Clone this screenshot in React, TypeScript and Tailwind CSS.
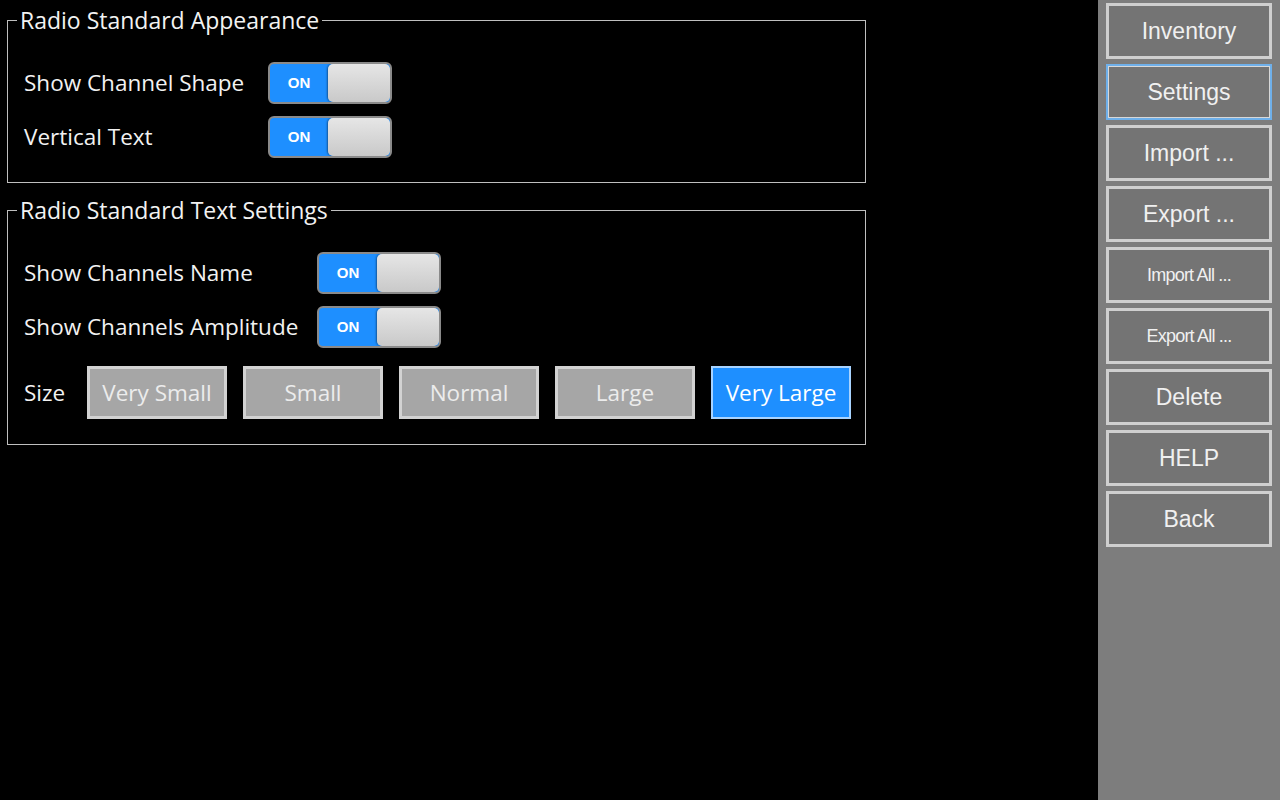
import React from "react";

const mainFont = { fontFamily: '"Open Sans", "Noto Sans", sans-serif' };

function Toggle() {
  return (
    <div className="flex h-[42px] w-[124px] overflow-hidden rounded-[6px] border-2 border-[#8a8a8a] bg-[#1e8fff]">
      <div className="flex w-[58px] items-center justify-center text-[15px] font-bold text-white" style={{ fontFamily: '"Liberation Sans", Arial, sans-serif' }}>
        ON
      </div>
      <div className="flex-1 rounded-[5px] bg-gradient-to-b from-[#e6e6e6] to-[#c9c9c9] shadow-[-1px_0_2px_rgba(0,0,0,0.4)]" />
    </div>
  );
}

function Row({ label, labelW }: { label: string; labelW: string }) {
  return (
    <div className="flex h-[42px] items-center">
      <div className={`${labelW} text-[22.5px] text-[#f2f2f2]`}>{label}</div>
      <Toggle />
    </div>
  );
}

function Group({ title, className, children }: { title: string; className: string; children: React.ReactNode }) {
  return (
    <div className={`relative border border-[#bfbfbf] ${className}`}>
      <div className="absolute -top-[16px] left-[9px] bg-black px-[3px] text-[23px] leading-[30px] text-[#f2f2f2]">
        {title}
      </div>
      {children}
    </div>
  );
}

const sizes = ["Very Small", "Small", "Normal", "Large", "Very Large"];

const side = [
  { t: "Inventory" },
  { t: "Settings", active: true },
  { t: "Import ..." },
  { t: "Export ..." },
  { t: "Import All ...", small: true },
  { t: "Export All ...", small: true },
  { t: "Delete" },
  { t: "HELP" },
  { t: "Back" },
];

export default function App() {
  return (
    <div className="flex h-[800px] w-[1280px] overflow-hidden bg-black" style={mainFont}>
      <div className="flex-1 pl-[7px] pt-[20px] pr-[232px]">
        <Group title="Radio Standard Appearance" className="h-[163px] w-[859px]">
          <div className="flex flex-col gap-[12px] pl-[16px] pt-[41px]">
            <Row label="Show Channel Shape" labelW="w-[244px]" />
            <Row label="Vertical Text" labelW="w-[244px]" />
          </div>
        </Group>
        <Group title="Radio Standard Text Settings" className="mt-[27px] h-[235px] w-[859px]">
          <div className="flex flex-col gap-[12px] pl-[16px] pt-[41px]">
            <Row label="Show Channels Name" labelW="w-[293px]" />
            <Row label="Show Channels Amplitude" labelW="w-[293px]" />
          </div>
          <div className="mt-[18px] flex items-center pl-[16px]">
            <div className="w-[63px] text-[22.5px] text-[#f2f2f2]">Size</div>
            <div className="flex gap-[16px]">
              {sizes.map((s) => {
                const on = s === "Very Large";
                return (
                  <div
                    key={s}
                    className={`flex h-[53px] w-[140px] items-center justify-center text-[22.5px] ${
                      on
                        ? "border-2 border-[#a8d3ff] bg-[#1e8fff] text-white"
                        : "border-[3px] border-[#d2d2d2] bg-[#a6a6a6] text-[#ececec]"
                    }`}
                  >
                    {s}
                  </div>
                );
              })}
            </div>
          </div>
        </Group>
      </div>
      <div className="flex w-[182px] flex-col gap-[5px] bg-[#7d7d7d] pl-[8px] pr-[8px] pt-[3px]" style={{ fontFamily: '"Liberation Sans", Arial, sans-serif' }}>
        {side.map((b) => (
          <div
            key={b.t}
            className={`flex h-[56px] items-center justify-center bg-[#747474] text-[#f0f0f0] ${
              b.active ? "border-2 border-[#6fb0ea] shadow-[inset_0_0_0_1px_#d8d8d8]" : "border-[3px] border-[#cfcfcf]"
            } ${b.small ? "text-[18px] tracking-[-0.8px]" : "text-[23px]"}`}
          >
            {b.t}
          </div>
        ))}
      </div>
    </div>
  );
}
